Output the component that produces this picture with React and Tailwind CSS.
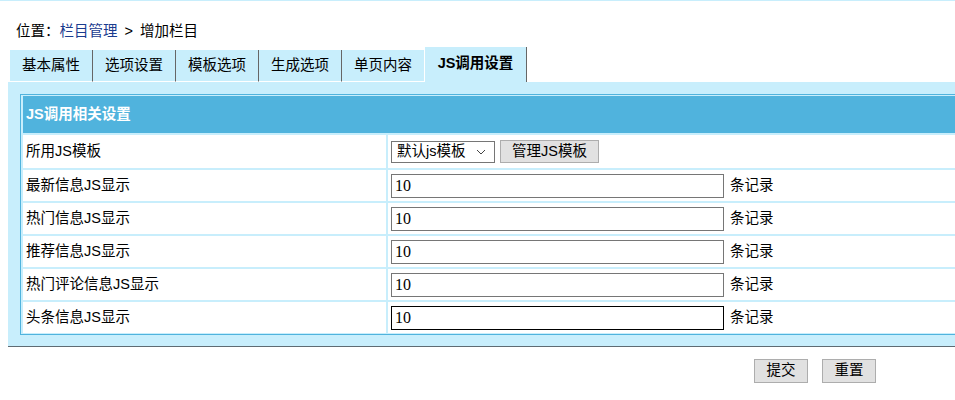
export default function App() {
  const rows = [
    { label: "最新信息JS显示", value: "10" },
    { label: "热门信息JS显示", value: "10" },
    { label: "推荐信息JS显示", value: "10" },
    { label: "热门评论信息JS显示", value: "10" },
    { label: "头条信息JS显示", value: "10", focused: true },
  ];
  const tabs = ["基本属性", "选项设置", "模板选项", "生成选项"];

  return (
    <div className="w-[955px] h-[400px] overflow-hidden bg-white text-[14.5px] text-black font-['Liberation_Sans','Noto_Sans_CJK_SC',sans-serif]">
      <div className="h-px bg-[#c8eefc]" />

      {/* breadcrumb */}
      <div className="h-[46px] pl-4 pt-[16px] leading-[28px] flex">
        <span>位置：</span>
        <a className="text-[#1a3c8f]">栏目管理</a>
        <span className="mx-[7px]">&gt;</span>
        <span>增加栏目</span>
      </div>

      {/* tabs */}
      <div className="flex items-end h-[35px] pl-[10px]">
        {tabs.map((t) => (
          <div
            key={t}
            className="h-[32px] w-[83px] bg-[#c8eefc] border-r border-r-[#666] border-b border-b-white flex items-center justify-center"
          >
            {t}
          </div>
        ))}
        <div className="h-[32px] w-[83px] bg-[#c8eefc] border-r border-r-white border-b border-b-white flex items-center justify-center">
          单页内容
        </div>
        <div className="h-[35px] w-[102px] bg-[#c8eefc] border-r border-r-[#666] flex items-center justify-center font-bold pb-[2px]">
          JS调用设置
        </div>
      </div>

      {/* panel */}
      <div className="ml-[8px] w-[1000px] bg-[#c8eefc] pt-[12px] pl-[12px] pb-[11px] border-b border-b-[#5f6b73]">
        <div className="border border-[#50b3dd] bg-[#c8eefc] pt-px pb-px pl-[2px] flex flex-col gap-[2px]">
          <div className="h-[37px] bg-[#50b3dd] pl-[3px] flex items-center text-white font-bold">
            JS调用相关设置
          </div>

          <div className="grid grid-cols-[363px_1fr] gap-x-[2px] h-[33px]">
            <div className="bg-white pl-[3px] flex items-center">所用JS模板</div>
            <div className="bg-white pl-[3px] flex items-center">
              <div className="w-[104px] h-[22px] border border-[#767676] bg-white flex items-center pl-[5px] pr-[6px] justify-between">
                <span>默认js模板</span>
                <svg width="10" height="6" viewBox="0 0 10 6" className="mr-[2px]">
                  <path d="M1 1 L5 5 L9 1" fill="none" stroke="#444" strokeWidth="1" />
                </svg>
              </div>
              <button className="ml-[5px] w-[99px] h-[23px] bg-[#e1e1e1] border border-[#adadad] flex items-center justify-center">
                管理JS模板
              </button>
            </div>
          </div>

          {rows.map((r) => (
            <div key={r.label} className="grid grid-cols-[363px_1fr] gap-x-[2px] h-[31px]">
              <div className="bg-white pl-[3px] flex items-center">{r.label}</div>
              <div className="bg-white pl-[3px] flex items-center">
                <div
                  className={
                    r.focused
                      ? "w-[333px] h-[24px] border border-black bg-white px-[3px] flex items-center font-['Liberation_Serif',serif] text-[16px]"
                      : "w-[333px] h-[24px] border border-[#767676] bg-white px-[3px] flex items-center font-['Liberation_Serif',serif] text-[16px]"
                  }
                >
                  {r.value}
                </div>
                <span className="ml-[6px]">条记录</span>
              </div>
            </div>
          ))}
        </div>
      </div>

      {/* actions */}
      <div className="flex gap-[14px] pl-[754px] mt-[12px]">
        <button className="w-[54px] h-[24px] bg-[#e1e1e1] border border-[#adadad] flex items-center justify-center">
          提交
        </button>
        <button className="w-[54px] h-[24px] bg-[#e1e1e1] border border-[#adadad] flex items-center justify-center">
          重置
        </button>
      </div>
    </div>
  );
}
